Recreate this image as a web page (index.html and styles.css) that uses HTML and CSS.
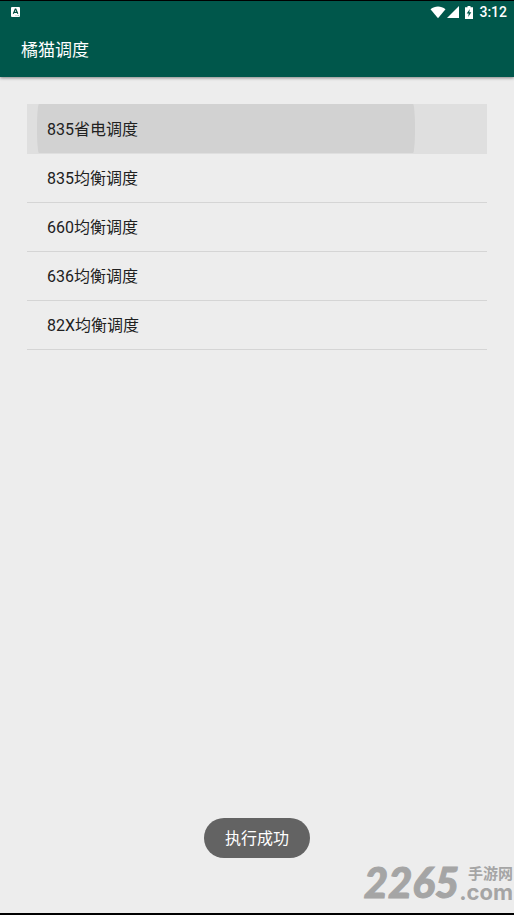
FILE: index.html
```html
<!DOCTYPE html>
<html lang="zh-CN">
<head>
<meta charset="utf-8">
<meta name="viewport" content="width=device-width, initial-scale=1">
<title>橘猫调度</title>
<link rel="stylesheet" href="styles.css">
</head>
<body>
<header class="app-header">
  <div class="status-bar">
    <svg class="notice" width="10" height="10" viewBox="0 0 10 10" aria-hidden="true">
      <rect width="9" height="10" rx="1" fill="#fff"/>
      <path d="M2.300 6.800 4.300 2h.5l2 4.800M3 5.300h3" fill="none" stroke="#004d40" stroke-width="1.200"/>
      <path d="M4.500 8.600h1M6.500 8.600h1.600" stroke="#7fada5" stroke-width=".8"/>
    </svg>
    <div class="system">
      <svg width="16" height="13" viewBox="0 0 16 13" aria-hidden="true">
        <path d="M.5 3.200C5-.5 11-.5 15.500 3.200L8 12.300Z" fill="#fff"/>
      </svg>
      <svg class="signal" width="12" height="12" viewBox="0 0 12 12" aria-hidden="true">
        <path d="M12 0v12H0Z" fill="#fff"/>
      </svg>
      <svg class="battery" width="8" height="13" viewBox="0 0 8 13" aria-hidden="true">
        <path d="M2.500 0h3v1.300H8V13H0V1.300h2.500Z" fill="#fff"/>
        <path d="M4.800 3 1.700 7.500h2L3.200 11l3.100-4.700h-2Z" fill="#00574b"/>
      </svg>
      <span class="clock">3:12</span>
    </div>
  </div>
  <h1 class="title">橘猫调度</h1>
</header>
<main class="content">
  <ul class="profiles">
    <li><button type="button" class="profile pressed">835省电调度</button></li>
    <li><button type="button" class="profile">835均衡调度</button></li>
    <li><button type="button" class="profile">660均衡调度</button></li>
    <li><button type="button" class="profile">636均衡调度</button></li>
    <li><button type="button" class="profile">82X均衡调度</button></li>
  </ul>
</main>
<div class="toast" role="status">执行成功</div>
<div class="watermark">
  <span class="mark-number">2265</span>
  <span class="mark-side">
    <span class="mark-name">手游网</span>
    <span class="mark-domain">.com</span>
  </span>
</div>
</body>
</html>
```
FILE: styles.css
```css
* {
  box-sizing: border-box;
}

body {
  margin: 0;
  min-height: 100vh;
  display: flex;
  flex-direction: column;
  position: relative;
  background: #ededed;
  border-bottom: 2px solid #000;
  color: #212121;
  font-family: Roboto, "Noto Sans CJK SC", sans-serif;
  font-size: 16px;
}

.app-header {
  background: #00574b;
  border-top: 1px solid #000;
  color: #fff;
  box-shadow: 0 1px 3px rgba(0, 0, 0, 0.45);
}

.status-bar {
  display: flex;
  align-items: center;
  justify-content: space-between;
  height: 22px;
  padding: 0 7px 0 11px;
}

.system {
  display: flex;
  align-items: center;
}

.signal {
  margin-left: 1px;
}

.battery {
  margin: 0 6px;
}

.clock {
  font-size: 14px;
  font-weight: 500;
  line-height: 22px;
}

.title {
  margin: 0;
  padding: 0 21px;
  font-size: 17px;
  font-weight: 400;
  line-height: 54px;
}

.content {
  flex: 1;
  padding: 27px;
}

.profiles {
  margin: 0;
  padding: 0;
  list-style: none;
}

.profile {
  display: block;
  width: 100%;
  height: 49px;
  padding: 0 20px 2px;
  border: 0;
  border-bottom: 1px solid #d5d5d5;
  background: none;
  color: inherit;
  font: inherit;
  text-align: left;
}

.pressed {
  position: relative;
  z-index: 0;
  height: 50px;
  background: #dfdfdf;
  border-color: #dfdfdf;
}

.pressed::before {
  content: "";
  position: absolute;
  z-index: -1;
  inset: 0 72px 0 10px;
  background: #d2d2d2;
  border-radius: 2px / 50%;
}

.toast {
  position: absolute;
  bottom: 55px;
  left: 50%;
  transform: translateX(-50%);
  padding: 2px 21px 0;
  border-radius: 20px;
  background: #636363;
  color: #fff;
  line-height: 38px;
  white-space: nowrap;
}

.watermark {
  position: absolute;
  right: 1px;
  bottom: 11px;
  display: flex;
  align-items: flex-end;
  color: #a5a5a5;
  font-weight: 700;
}

.mark-number {
  font-family: Lato, sans-serif;
  font-size: 42px;
  font-style: italic;
  font-weight: 900;
  line-height: 40px;
  -webkit-text-stroke: 1px #a5a5a5;
}

.mark-side {
  display: flex;
  flex-direction: column;
}

.mark-name {
  font-size: 15px;
  line-height: 16px;
  text-align: right;
}

.mark-domain {
  font-family: Inter, sans-serif;
  font-size: 22px;
  line-height: 20px;
}
```
